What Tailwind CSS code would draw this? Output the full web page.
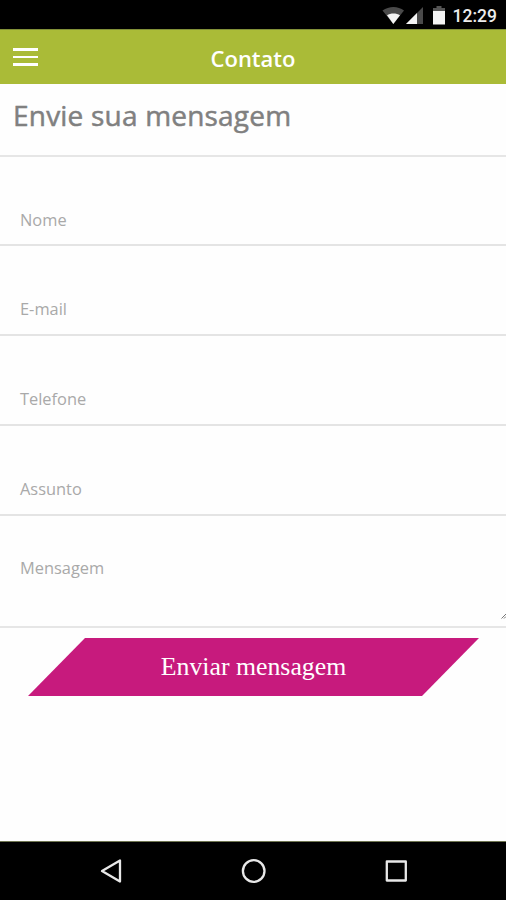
<!DOCTYPE html>
<html lang="pt-BR">
<head>
    <meta charset="UTF-8">
    <meta name="viewport" content="width=device-width, initial-scale=1.0">
    <title>Contato</title>

    <!-- Tailwind CSS -->
    <script src="https://cdn.jsdelivr.net/npm/@tailwindcss/browser@4"></script>
</head>
<body class="h-[900px] w-[506px] flex flex-col overflow-hidden bg-[#fefefe] font-['Open_Sans',sans-serif]">
    <!-- Status bar -->
    <div class="h-[29px] shrink-0 bg-black flex items-start justify-end pr-[9px] pt-[6px]">
        <svg class="w-[64px] h-[20px] mr-[8px]" viewBox="0 0 64 20">
            <path d="M1.500 4.500C8 -.3 17 -.3 23 4.500L12.300 18Z" fill="#4a4a4a"/>
            <path d="M6 9.300C9.500 6.800 15.500 6.800 19 9.300L12.300 18Z" fill="#f4f4f4"/>
            <path d="M42 1V18H25Z" fill="#4a4a4a"/>
            <path d="M36 7V18H25Z" fill="#f4f4f4"/>
            <path d="M55.500 0H60.500V2H64V6H52V2H55.500Z" fill="#555"/>
            <path d="M52 5H64V18.500H52Z" fill="#f4f4f4"/>
        </svg>
        <span class="font-['Roboto',sans-serif] font-medium text-[17.500px] leading-[20px] text-[#ececec]">12:29</span>
    </div>

    <!-- Header -->
    <header class="h-[55px] shrink-0 bg-[#aabb37] border-t border-[#829038] grid grid-cols-[1fr_auto_1fr] items-center">
        <button class="ml-[13px] flex flex-col gap-[5px] w-[25px]" aria-label="Menu">
            <span class="h-[2.500px] w-full bg-white"></span>
            <span class="h-[2.500px] w-full bg-white"></span>
            <span class="h-[2.500px] w-full bg-white"></span>
        </button>
        <h1 class="text-white font-semibold text-[22px] leading-[30px] pt-[1px]">Contato</h1>
    </header>

    <!-- Contact form -->
    <main class="flex-1 flex flex-col">
        <h2 class="h-[73px] shrink-0 border-b-2 border-[#e6e6e6] pl-[13px] pt-[11px] text-[28px] leading-[40px] tracking-[0.2px] text-[#808080] [-webkit-text-stroke:0.500px_#808080]">Envie sua mensagem</h2>

        <div class="h-[89px] shrink-0 border-b-2 border-[#e4e4e4] pl-[20px] pt-[51px] text-[16.400px] leading-[24px] text-[#a9a9a9]"><span>Nome</span></div>
        <div class="h-[90px] shrink-0 border-b-2 border-[#e4e4e4] pl-[20px] pt-[51px] text-[16.400px] leading-[24px] text-[#a9a9a9]"><span>E-mail</span></div>
        <div class="h-[90px] shrink-0 border-b-2 border-[#e4e4e4] pl-[20px] pt-[51px] text-[16.400px] leading-[24px] text-[#a9a9a9]"><span>Telefone</span></div>
        <div class="h-[90px] shrink-0 border-b-2 border-[#e4e4e4] pl-[20px] pt-[51px] text-[16.400px] leading-[24px] text-[#a9a9a9]"><span>Assunto</span></div>
        <div class="h-[112px] shrink-0 border-b-2 border-[#e6e6e6] pl-[20px] pt-[40px] text-[16.400px] leading-[24px] text-[#a9a9a9] flex justify-between">
            <span>Mensagem</span>
            <!-- Resize handle -->
            <svg class="w-[5px] h-[6px] self-end mb-[7px]" viewBox="0 0 5 6">
                <path d="M.5 5.500L5 1M3 5.500L5 3.500" stroke="#777" stroke-width="1"/>
            </svg>
        </div>

        <button class="mt-[10px] ml-[28px] w-[451px] h-[58px] shrink-0 bg-[#c71a7d] [clip-path:polygon(57px_0,100%_0,394px_100%,0_100%)] font-['Liberation_Serif',serif] text-[25.800px] leading-[58px] text-white">Enviar mensagem</button>
    </main>

    <!-- Navigation bar -->
    <nav class="h-[59px] shrink-0 bg-black border-t border-[#6f7651] flex">
        <svg class="w-[506px] h-[58px]" viewBox="0 0 506 58" fill="none" stroke="#e8e8e8" stroke-width="2.300" stroke-linejoin="round">
            <path d="M102 29L120 18.500V39.500Z"/>
            <circle cx="253.700" cy="29" r="10.800"/>
            <rect x="386.800" y="19.500" width="19" height="19"/>
        </svg>
    </nav>
</body>
</html>
